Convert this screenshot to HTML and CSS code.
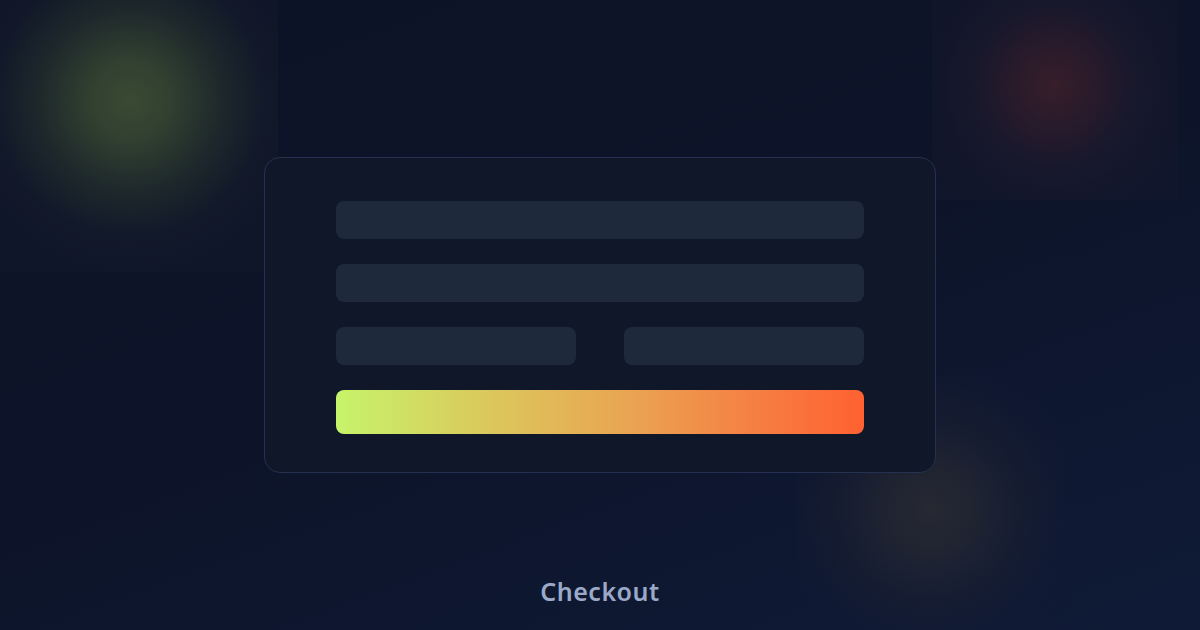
FILE: index.html
```html
<!DOCTYPE html>
<html lang="en">
<head>
  <meta charset="UTF-8" />
  <title>Checkout</title>
  <link rel="stylesheet" href="styles.css">
</head>
<body>

  <div class="glow glow-green"></div>
  <div class="glow glow-red"></div>
  <div class="glow glow-amber"></div>

  <main class="stage">
    <div class="checkout-card">
      <div class="field"></div>
      <div class="field"></div>
      <div class="field-row">
        <div class="field"></div>
        <div class="field"></div>
      </div>
      <div class="pay-button"></div>
    </div>

    <p class="caption">Checkout</p>
  </main>

</body>
</html>
```

FILE: styles.css
```css
html, body {
  margin: 0;
  padding: 0;
  width: 100%;
  height: 100%;
  overflow: hidden;
}

body {
  position: relative;
  background: linear-gradient(160deg, #0c1226 0%, #0d1429 45%, #0f1a36 100%);
  font-family: "Noto Sans", "DejaVu Sans", sans-serif;
}

/* soft coloured lights behind the card */
.glow {
  position: absolute;
  pointer-events: none;
}
.glow-green {
  left: 0;
  top: 0;
  width: 278px;
  height: 272px;
  background: radial-gradient(
    circle at 130px 100px,
    rgba(62, 80, 52, 0.9) 0px,
    rgba(56, 72, 50, 0.85) 40px,
    rgba(42, 55, 46, 0.6) 90px,
    rgba(28, 36, 46, 0.35) 135px,
    rgba(24, 30, 44, 0.25) 180px
  );
}
.glow-red {
  left: 932px;
  top: 0;
  width: 246px;
  height: 200px;
  background: radial-gradient(
    circle at 122px 85px,
    rgba(62, 32, 42, 0.85) 0px,
    rgba(55, 30, 44, 0.7) 35px,
    rgba(38, 28, 46, 0.45) 80px,
    rgba(28, 26, 46, 0.3) 120px,
    rgba(24, 25, 46, 0.25) 160px
  );
}
.glow-amber {
  left: 795px;
  top: 375px;
  width: 270px;
  height: 255px;
  background: radial-gradient(
    circle at 135px 135px,
    rgba(44, 44, 50, 0.8) 0px,
    rgba(40, 42, 50, 0.7) 40px,
    rgba(30, 34, 50, 0.45) 90px,
    rgba(20, 27, 50, 0.25) 130px,
    rgba(15, 24, 50, 0.15) 160px
  );
}

.stage {
  position: relative;
  display: flex;
  flex-direction: column;
  align-items: center;
  padding-top: 157px;
}

.checkout-card {
  box-sizing: border-box;
  width: 672px;
  height: 316px;
  padding: 43px 71px 0;
  display: flex;
  flex-direction: column;
  gap: 25px;
  background: #0f1729;
  border: 1px solid #253150;
  border-radius: 16px;
}

.field {
  height: 38px;
  border-radius: 8px;
  background: #1e293b;
}

.field-row {
  display: grid;
  grid-template-columns: 240px 240px;
  justify-content: space-between;
}

.pay-button {
  height: 44px;
  border-radius: 8px;
  background: linear-gradient(
    to right,
    #c6f46a 0%,
    #dcc65c 30%,
    #e9a552 55%,
    #f58144 78%,
    #ff6131 100%
  );
}

.caption {
  margin: 102px 0 0;
  font-size: 25px;
  line-height: 32px;
  font-weight: 600;
  letter-spacing: 0.5px;
  color: #9ba9c8;
}
```
